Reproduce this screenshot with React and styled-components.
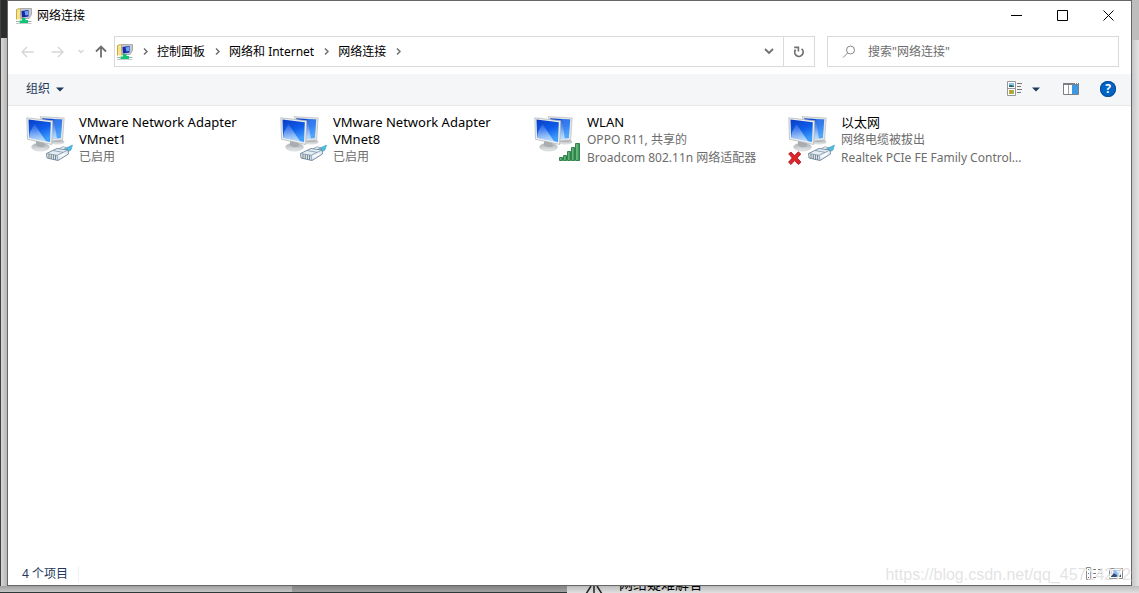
import { useId, useState } from "react";
import styled, { createGlobalStyle } from "styled-components";

const adapters = [
  {
    name: "VMware Network Adapter VMnet1",
    lines: ["已启用"],
    kind: "cable",
  },
  {
    name: "VMware Network Adapter VMnet8",
    lines: ["已启用"],
    kind: "cable",
  },
  {
    name: "WLAN",
    lines: ["OPPO R11, 共享的", "Broadcom 802.11n 网络适配器"],
    kind: "wifi",
  },
  {
    name: "以太网",
    lines: ["网络电缆被拔出", "Realtek PCIe FE Family Control..."],
    kind: "unplugged",
  },
];

const crumbs = ["控制面板", "网络和 Internet", "网络连接"];

export default function App() {
  const [query, setQuery] = useState("");

  return (
    <>
      <GlobalStyle />
      <Desktop>
        <LeftEdge />
        <Window>
          <TitleBar>
            <NetworkIcon />
            <Title>网络连接</Title>
            <CaptionButton aria-label="最小化">
              <CaptionIcon>
                <path d="M0 5.5H11" />
              </CaptionIcon>
            </CaptionButton>
            <CaptionButton aria-label="最大化">
              <CaptionIcon>
                <path d="M.5 .5H10.5V10.5H.5Z" />
              </CaptionIcon>
            </CaptionButton>
            <CaptionButton aria-label="关闭">
              <CaptionIcon>
                <path d="M.5 .5L10.5 10.5M10.5 .5L.5 10.5" />
              </CaptionIcon>
            </CaptionButton>
          </TitleBar>

          <NavRow>
            <NavButtons>
              <NavButton $width="30px" $color="#d6d6d6" aria-label="后退">
                <svg width="13" height="12" viewBox="0 0 13 12">
                  <path d="M12.5 6H1.5M6 1L1 6L6 11" />
                </svg>
              </NavButton>
              <NavButton $width="30px" $color="#d6d6d6" aria-label="前进">
                <svg width="13" height="12" viewBox="0 0 13 12">
                  <path d="M.5 6H11.5M7 1L12 6L7 11" />
                </svg>
              </NavButton>
              <NavButton $width="18px" $color="#d6d6d6" aria-label="最近浏览的位置">
                <svg width="6" height="5" viewBox="0 0 6 5">
                  <path d="M.5 1L3 3.5L5.5 1" />
                </svg>
              </NavButton>
              <NavButton $width="22px" $color="#707070" aria-label="上移">
                <svg width="12" height="13" viewBox="0 0 12 13">
                  <path d="M6 12.5V1.5M1 6.5L6 1.5L11 6.5" strokeWidth="1.8" />
                </svg>
              </NavButton>
            </NavButtons>
            <AddressBar>
              <NetworkIcon />
              <Crumbs aria-label="地址">
                <CrumbArrow />
                {crumbs.map((crumb) => (
                  <Crumb key={crumb}>
                    <a href="#">{crumb}</a>
                    <CrumbArrow />
                  </Crumb>
                ))}
              </Crumbs>
              <AddressButton aria-label="历史记录">
                <svg width="10" height="7" viewBox="0 0 10 7">
                  <path d="M1 1L5 5L9 1" />
                </svg>
              </AddressButton>
              <AddressButton $divided aria-label="刷新">
                <svg width="12" height="12" viewBox="0 0 12 12">
                  <path d="M8.6 2.9A4.2 4.2 0 1 1 2.6 3.6" />
                  <path d="M1.2 1.4H5.4V5.4" strokeWidth="1.6" />
                </svg>
              </AddressButton>
            </AddressBar>
            <SearchBox>
              <svg width="14" height="14" viewBox="0 0 14 14">
                <circle cx="8.5" cy="5" r="4" />
                <path d="M5.6 8L1 12.6" />
              </svg>
              <input
                type="text"
                aria-label="搜索"
                placeholder={'搜索"网络连接"'}
                value={query}
                onChange={(e) => setQuery(e.target.value)}
              />
            </SearchBox>
          </NavRow>

          <Toolbar>
            <ToolButton>
              组织
              <DownTriangle />
            </ToolButton>
            <ToolGroup>
              <ToolButton aria-label="更改视图">
                <ViewsIcon />
              </ToolButton>
              <ToolButton aria-label="更多选项">
                <DownTriangle />
              </ToolButton>
              <ToolButton $before="14px" aria-label="显示预览窗格">
                <PaneIcon />
              </ToolButton>
              <ToolButton $before="12px" aria-label="获取帮助">
                <HelpBadge>?</HelpBadge>
              </ToolButton>
            </ToolGroup>
          </Toolbar>

          <AdapterList>
            {adapters.map((adapter) => (
              <Adapter key={adapter.name}>
                <AdapterIcon kind={adapter.kind} />
                <AdapterText>
                  <AdapterName>{adapter.name}</AdapterName>
                  {adapter.lines.map((line) => (
                    <AdapterLine key={line}>{line}</AdapterLine>
                  ))}
                </AdapterText>
              </Adapter>
            ))}
          </AdapterList>

          <StatusBar>
            <ItemCount>4 个项目</ItemCount>
            <StatusButton aria-label="详细信息">
              <DetailsIcon />
            </StatusButton>
            <StatusButton aria-label="大图标">
              <ThumbIcon />
            </StatusButton>
          </StatusBar>
          <Watermark>https://blog.csdn.net/qq_45714272</Watermark>
        </Window>
        <RightEdge />
        <BottomEdge>
          <BackPane />
          <BackPage>
            <svg width="18" height="7" viewBox="0 0 18 7">
              <path d="M1 8L6 0M17 8L12 0M9 0V7" />
            </svg>
            <BackLink href="#">网络疑难解答</BackLink>
          </BackPage>
        </BottomEdge>
      </Desktop>
    </>
  );
}

function CaptionIcon({ children }) {
  return (
    <svg width="11" height="11" viewBox="0 0 11 11" fill="none" stroke="#000">
      {children}
    </svg>
  );
}

function CrumbArrow() {
  return (
    <ArrowCell>
      <svg width="5" height="7" viewBox="0 0 5 7">
        <path d="M1 .5L4 3.5L1 6.5" />
      </svg>
    </ArrowCell>
  );
}

function DownTriangle() {
  return (
    <svg width="8" height="5" viewBox="0 0 8 5">
      <path d="M0 .5H8L4 4.5Z" fill="#1e395b" />
    </svg>
  );
}

function NetworkIcon() {
  return (
    <svg width="16" height="16" viewBox="0 0 16 16">
      <path d="M.5 1.5L3.5 .5L5 1.5V12.5H.5Z" fill="#f6e38a" stroke="#c9a94a" />
      <path d="M4.5 .5H15.5V6.5L13 10.5H5Z" fill="#c3c8cc" stroke="#9aa0a5" strokeWidth=".8" />
      <path d="M5.5 3L12.5 2V8.5L6 9.5Z" fill="#1528a8" />
      <path d="M8.5 3.5L12 2.7V7L9.5 7.5Z" fill="#6fa4f5" />
      <path d="M0 11.5H16V16H0Z" fill="#fff" />
      <path d="M6 10H9.5V12H12V15H3.5V12.5H6Z" fill="#12c476" />
      <path d="M0 13.5H3.5M12 13.5H15.5" stroke="#9fb3ad" />
      <path d="M0 15.5H15.5" stroke="#c3c9c8" />
    </svg>
  );
}

function ViewsIcon() {
  return (
    <svg width="16" height="16" viewBox="0 0 16 16">
      <path d="M.5 .5H8.5V14.5H.5ZM.5 7.5H8.5" fill="#fff" stroke="#979797" />
      <path d="M2 2H7V6H2Z" fill="#8cc3ee" />
      <path d="M2 4.5L4 4L7 5V6H2Z" fill="#24655c" />
      <path d="M2 9H7V13H2Z" fill="#9bb84c" />
      <path d="M2 9H4L5.5 11L4 13Z" fill="#d6902c" />
      <path d="M10 2.5H15M10 5.5H14M10 8.5H15M10 11.5H14" stroke="#777" />
    </svg>
  );
}

function PaneIcon() {
  return (
    <svg width="16" height="12" viewBox="0 0 16 12">
      <path d="M.5 .5H15.5V11.5H.5Z" fill="#fff" stroke="#7a7f85" />
      <path d="M0 1H16" stroke="#7a7f85" strokeWidth="2" />
      <path d="M5.5 2V11" stroke="#9a9fa5" />
      <path d="M9 2H15V11H9Z" fill="#3d98e3" />
      <path d="M12 .5H13M14 .5H15" stroke="#fff" />
    </svg>
  );
}

function DetailsIcon() {
  return (
    <svg width="16" height="13" viewBox="0 0 16 13">
      <path d="M.5 .5H4.5V12.5H.5Z" fill="#fff" stroke="#8b8b8b" />
      <path d="M2 2.5H3" stroke="#34a853" />
      <path d="M2 6.5H3" stroke="#2f7fd6" />
      <path d="M2 10.5H3" stroke="#d83b2f" />
      <path
        d="M6 2.5H10M12 2.5H16M6 6.5H10M12 6.5H16M6 10.5H10M12 10.5H16"
        stroke="#777"
      />
    </svg>
  );
}

function ThumbIcon() {
  return (
    <svg width="14" height="11" viewBox="0 0 14 11">
      <path d="M.5 .5H13.5V10.5H.5Z" fill="#fff" stroke="#8b8b8b" />
      <path d="M2 2H12V9H2Z" fill="#8ebbea" />
      <path d="M2 6L4 5L8 7L12 7V9H2Z" fill="#27517e" />
      <path d="M7 3H12V5H9Z" fill="#e8f3fc" />
    </svg>
  );
}

function AdapterIcon({ kind }) {
  const id = useId();
  const screen = `${id}screen`;
  const glare = `${id}glare`;
  const stand = `${id}stand`;
  const bars = `${id}bars`;

  return (
    <svg width="48" height="52" viewBox="0 0 48 52">
      <defs>
        <linearGradient id={screen} x1="0" y1="0" x2=".35" y2="1">
          <stop offset="0" stopColor="#0a3cc4" />
          <stop offset=".55" stopColor="#0f5eea" />
          <stop offset="1" stopColor="#3f9dfb" />
        </linearGradient>
        <linearGradient id={glare} x1="0" y1="0" x2="0" y2="1">
          <stop offset="0" stopColor="#fff" stopOpacity=".08" />
          <stop offset="1" stopColor="#fff" stopOpacity=".65" />
        </linearGradient>
        <linearGradient id={stand} x1="0" y1="0" x2="0" y2="1">
          <stop offset="0" stopColor="#a9adb0" />
          <stop offset="1" stopColor="#e9ebec" />
        </linearGradient>
        <linearGradient id={bars} x1="0" y1="0" x2="1" y2="0">
          <stop offset="0" stopColor="#7cc68f" />
          <stop offset="1" stopColor="#2f8f4e" />
        </linearGradient>
      </defs>

      {/* rear monitor */}
      <ellipse cx="31" cy="28" rx="7.5" ry="2.8" fill={`url(#${stand})`} />
      <path d="M27 22H34L35 28H28Z" fill="#b3b6b8" />
      <path d="M14 2.6L38.2 4L36.6 26L24 27Z" fill="#e3e5e6" stroke="#b9bdc0" strokeWidth=".7" />
      <path d="M16 4.3L36.2 5.6L34.8 24L25 25Z" fill={`url(#${screen})`} />
      <path d="M28 5L31 24.4L25 25V6Z" fill={`url(#${glare})`} />
      <path d="M28 5L31 24.4L34.8 24L36.2 5.6Z" fill="#6fb2fb" opacity=".4" />

      {/* front monitor */}
      <ellipse cx="14.5" cy="33" rx="9" ry="4" fill={`url(#${stand})`} stroke="#c1c4c6" strokeWidth=".5" />
      <path d="M10 26L18 28L19 32.5Q14 34.5 10 31.5Z" fill="#a9adb0" />
      <path d="M.8 3.8L26.7 6.8L25.7 30.5L1.5 25.3Z" fill="#eceeef" stroke="#adb1b4" strokeWidth=".7" />
      <path d="M2.5 5.6L24.8 8.3L24 28.1L3.1 23.8Z" fill={`url(#${screen})`} />
      <path d="M8.5 10L20 27.3L3.1 23.8L4 18Z" fill={`url(#${glare})`} />

      {kind === "wifi" ? (
        <g fill={`url(#${bars})`} stroke="#237b40" strokeWidth=".9">
          <path d="M25.5 43.5H28.5V46.5H25.5Z" />
          <path d="M29.5 41.5H32.5V46.5H29.5Z" />
          <path d="M33.5 37.5H36.5V46.5H33.5Z" />
          <path d="M37.5 33.5H40.5V46.5H37.5Z" />
          <path d="M41.5 29.5H45.5V46.5H41.5Z" />
        </g>
      ) : (
        <g strokeLinejoin="round">
          <path d="M36 36L46.5 31L45 36L40 39Z" fill="#4dbde2" stroke="#3193b5" strokeWidth=".5" />
          <path d="M20.5 39.5L31 34.5L42 36L42.5 40L32 46.5L21 44Z" fill="#e6eef5" stroke="#6c8499" strokeWidth=".9" />
          <path d="M20.5 39.5L31 41.3L42 36M31 41.3L32 46.5M27 36.5L37 38.3M33 34.8L37 32.8L42 34" fill="none" stroke="#7d93a6" strokeWidth=".8" />
          <path d="M23 40V44.4M25.3 40.4V44.9M27.6 40.8V45.4M29.6 41.2V45.9" stroke="#5f7589" strokeWidth=".9" />
          <path d="M22 43H28" stroke="#c8b25b" strokeWidth=".7" strokeDasharray="1 1.3" />
          <path d="M34 42.5L39 40" stroke="#fff" strokeWidth="1.6" />
        </g>
      )}
      {kind === "unplugged" && (
        <path
          d="M.7 39.8L3 38L6.5 41.7L10.3 37.8L12.8 40L9.2 44L13 48.2L10.4 50.5L6.6 46.6L3 50.5L.5 48.2L4.2 44Z"
          fill="#e0222a"
          stroke="#a8131a"
          strokeWidth=".8"
        />
      )}
    </svg>
  );
}

const GlobalStyle = createGlobalStyle`
  * {
    box-sizing: border-box;
  }

  body {
    margin: 0;
    overflow: hidden;
    font-family: "Noto Sans", "Noto Sans CJK SC", sans-serif;
    font-size: 12px;
    line-height: 18px;
    color: #000;
  }

  button, input {
    font: inherit;
    color: inherit;
    border: 0;
    padding: 0;
    background: none;
  }

  a {
    color: inherit;
    text-decoration: none;
  }

  svg {
    display: block;
    flex-shrink: 0;
  }
`;

const Desktop = styled.div`
  display: grid;
  grid-template-columns: 7px 1fr 7px;
  grid-template-rows: 1fr 7px;
  min-height: 100vh;
  background: #d4d4d4;
`;

const LeftEdge = styled.div`
  border-left: 1px solid #3a4544;
  background: linear-gradient(#2c2c2c 38px, transparent 38px),
    linear-gradient(90deg, #dad6d6, #b9b5b5);
`;

const RightEdge = styled.div`
  background: linear-gradient(#bdbdbd 40px, transparent 40px),
    linear-gradient(90deg, #c6c6c6, #e4e4e4);
`;

const BottomEdge = styled.div`
  grid-column: 1 / -1;
  display: flex;
  overflow: hidden;
`;

const BackPane = styled.div`
  width: 567px;
  border-bottom: 1px solid #2c3837;
  background: linear-gradient(90deg, transparent 292px, #00000030 292px),
    linear-gradient(#a0a0a0, #c6c6c6);
`;

const BackPage = styled.div`
  flex: 1;
  display: flex;
  align-items: flex-end;
  gap: 16px;
  padding-left: 18px;
  background: linear-gradient(#bcbcbc, #e0e0e0);

  svg {
    fill: none;
    stroke: #222;
    stroke-width: 1.5;
  }
`;

const BackLink = styled.a`
  font-size: 14px;
  line-height: 18px;
`;

const Window = styled.main`
  position: relative;
  display: flex;
  flex-direction: column;
  min-width: 0;
  border: 1px solid #666;
  background: #fff;
`;

const TitleBar = styled.header`
  display: flex;
  align-items: center;
  height: 29px;
  padding-left: 8px;
`;

const Title = styled.h1`
  flex: 1;
  margin: 0 0 0 5px;
  font-size: 12px;
  font-weight: 400;
`;

const CaptionButton = styled.button`
  display: grid;
  place-items: center;
  width: 46px;
  height: 29px;
`;

const NavRow = styled.nav`
  display: flex;
  height: 44px;
  padding: 6px 12px 7px 4px;
`;

const NavButtons = styled.div`
  display: flex;
  width: 102px;
`;

const NavButton = styled.button`
  display: grid;
  place-items: center;
  width: ${(props) => props.$width};

  svg {
    fill: none;
    stroke: ${(props) => props.$color};
    stroke-width: 1.4;
  }
`;

const AddressBar = styled.div`
  flex: 1;
  display: flex;
  align-items: center;
  min-width: 0;
  padding-left: 2px;
  border: 1px solid #d9d9d9;
`;

const Crumbs = styled.div`
  flex: 1;
  display: flex;
`;

const Crumb = styled.span`
  display: flex;
`;

const ArrowCell = styled.span`
  display: grid;
  place-items: center;
  width: 24px;

  svg {
    fill: none;
    stroke: #707070;
    stroke-width: 1.5;
  }
`;

const AddressButton = styled.button`
  display: grid;
  place-items: center;
  align-self: stretch;
  width: ${(props) => (props.$divided ? "31px" : "29px")};
  border-left: ${(props) => (props.$divided ? "1px solid #d9d9d9" : "0")};

  svg {
    fill: none;
    stroke: #707070;
    stroke-width: 1.8;
  }
`;

const SearchBox = styled.label`
  display: flex;
  align-items: center;
  gap: 12px;
  width: 292px;
  margin-left: 12px;
  padding-left: 14px;
  border: 1px solid #d9d9d9;

  svg {
    fill: none;
    stroke: #8a8590;
  }

  input {
    flex: 1;
    min-width: 0;
    outline: none;
  }

  input::placeholder {
    color: #6d6d6d;
    opacity: 1;
  }
`;

const Toolbar = styled.div`
  display: flex;
  align-items: center;
  justify-content: space-between;
  height: 32px;
  padding: 0 15px 1px 18px;
  border-bottom: 1px solid #e6e8ea;
  background: #f5f6f7;
`;

const ToolGroup = styled.div`
  display: flex;
  align-items: center;
  gap: 9px;
`;

const ToolButton = styled.button`
  display: flex;
  align-items: center;
  gap: 6px;
  margin-left: ${(props) => props.$before || "0"};
  color: #1e395b;
`;

const HelpBadge = styled.span`
  width: 16px;
  height: 16px;
  border-radius: 50%;
  background: #0063c6;
  box-shadow: inset 0 0 0 1px #0a4f98;
  color: #fff;
  font-weight: 700;
  line-height: 16px;
  text-align: center;
`;

const AdapterList = styled.ul`
  flex: 1;
  display: grid;
  grid-template-columns: repeat(auto-fill, 254px);
  align-content: start;
  margin: 0;
  padding: 8px 18px;
  list-style: none;
`;

const Adapter = styled.li`
  display: flex;
  gap: 5px;
`;

const AdapterText = styled.div`
  width: 190px;
  color: #6d6d6d;
`;

const AdapterName = styled.div`
  max-width: 170px;
  color: #000;
  font-size: 13px;
  line-height: 17px;
`;

const AdapterLine = styled.div`
  overflow: hidden;
  white-space: nowrap;
  text-overflow: ellipsis;
`;

const StatusBar = styled.footer`
  display: flex;
  align-items: center;
  height: 24px;
  padding: 1px 8px 0 14px;
  color: #1e395b;
`;

const ItemCount = styled.span`
  padding-right: 10px;
  margin-right: auto;
  border-right: 1px solid #f0f0f0;
  line-height: 16px;
`;

const StatusButton = styled.button`
  margin-left: 7px;
`;

/* floats above the status bar */
const Watermark = styled.span`
  position: absolute;
  right: 0;
  bottom: 1px;
  color: #dcdcdccc;
  font-family: "Liberation Sans", sans-serif;
  font-size: 16px;
  text-shadow: 1px 1px 0 #fff;
  pointer-events: none;
`;
